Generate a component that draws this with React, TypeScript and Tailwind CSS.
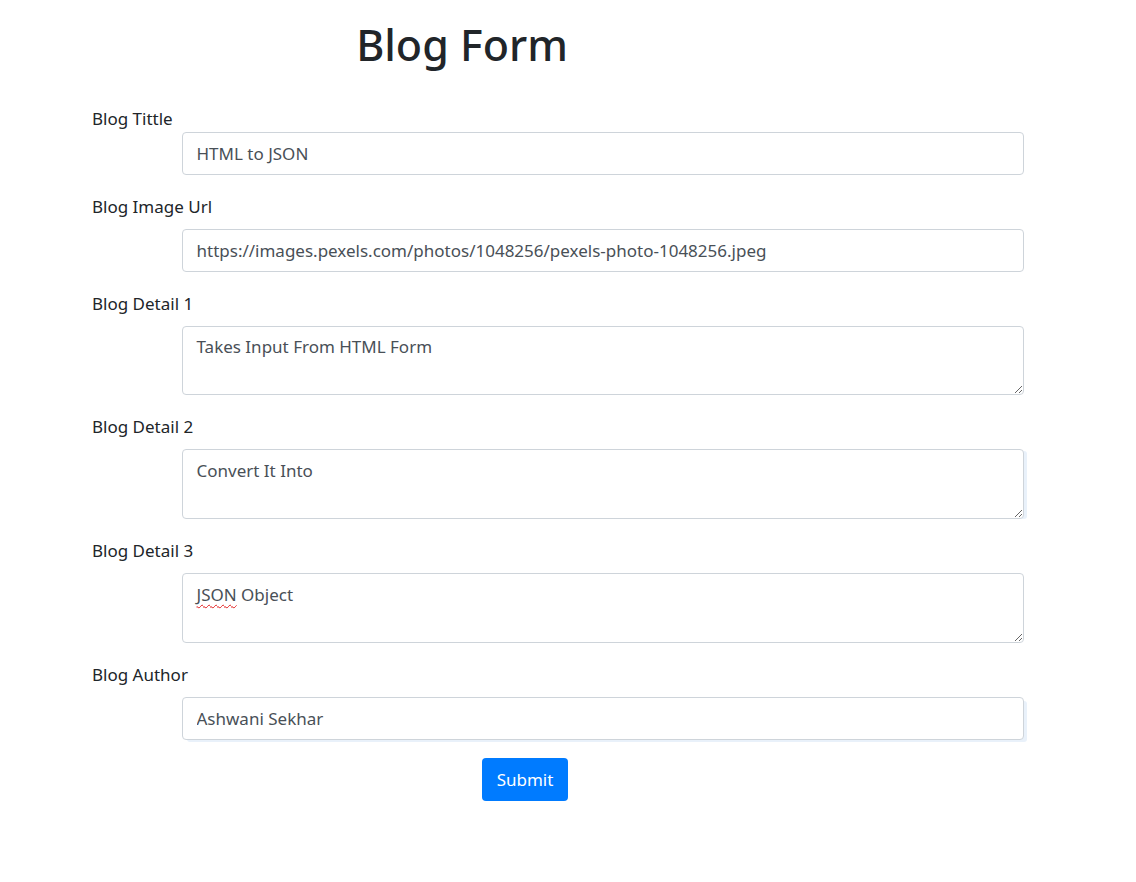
export default function App() {
  const field =
    "block w-[842px] rounded-[4px] border border-[#ced4da] bg-white px-[13.5px] text-[17px] text-[#495057] outline-none"
  const label = "block h-[27px] text-[17px] leading-[27px] text-[#212529]"

  return (
    <div
      className="min-h-screen bg-white"
      style={{ fontFamily: '"Noto Sans", "Open Sans", sans-serif' }}
    >
      <div className="w-[924px] pt-[18px]">
        <h1 className="h-[54px] text-center text-[43px] font-medium leading-[54px] text-[#212529]">
          Blog Form
        </h1>
      </div>

      <form className="pl-[92px]">
        {/* title */}
        <div className="mt-[32.5px] mb-[18px]">
          <label className={label}>Blog Tittle</label>
          <input
            className={`${field} ml-[90px] h-[43px]`}
            defaultValue="HTML to JSON"
          />
        </div>

        <div className="mb-[18px]">
          <label className={`${label} mb-[9px]`}>Blog Image Url</label>
          <input
            className={`${field} ml-[90px] h-[43px]`}
            defaultValue="https://images.pexels.com/photos/1048256/pexels-photo-1048256.jpeg"
          />
        </div>

        <div className="mb-[18px]">
          <label className={`${label} mb-[9px]`}>Blog Detail 1</label>
          <textarea
            rows={2}
            className={`${field} ml-[90px] h-[69.75px] py-[6.75px] leading-[27px]`}
            defaultValue="Takes Input From HTML Form"
          />
        </div>

        <div className="mb-[18px]">
          <label className={`${label} mb-[9px]`}>Blog Detail 2</label>
          <textarea
            rows={2}
            className={`${field} ml-[90px] h-[69.75px] py-[6.75px] leading-[27px] shadow-[4px_1px_0_-1px_#e9f1fa]`}
            defaultValue="Convert It Into"
          />
        </div>

        <div className="mb-[18px]">
          <label className={`${label} mb-[9px]`}>Blog Detail 3</label>
          <div className="relative ml-[90px] w-[842px]">
            <textarea
              rows={2}
              className={`${field} h-[69.75px] py-[6.75px] leading-[27px]`}
              defaultValue="JSON Object"
            />
            <span className="pointer-events-none absolute left-[14.5px] top-[7.75px] text-[17px] leading-[27px] text-transparent underline decoration-[#e01b1b] decoration-wavy decoration-1 underline-offset-[3px]">
              JSON
            </span>
          </div>
        </div>

        <div className="mb-[18px]">
          <label className={`${label} mb-[9px]`}>Blog Author</label>
          <input
            className={`${field} ml-[90px] h-[43px] shadow-[4px_3px_0_-1px_#e9f1fa]`}
            defaultValue="Ashwani Sekhar"
          />
        </div>

        <button
          type="button"
          className="ml-[390px] h-[42.75px] w-[86px] rounded-[4px] bg-[#007bff] text-[17px] leading-[27px] text-white"
        >
          Submit
        </button>
      </form>
    </div>
  )
}
